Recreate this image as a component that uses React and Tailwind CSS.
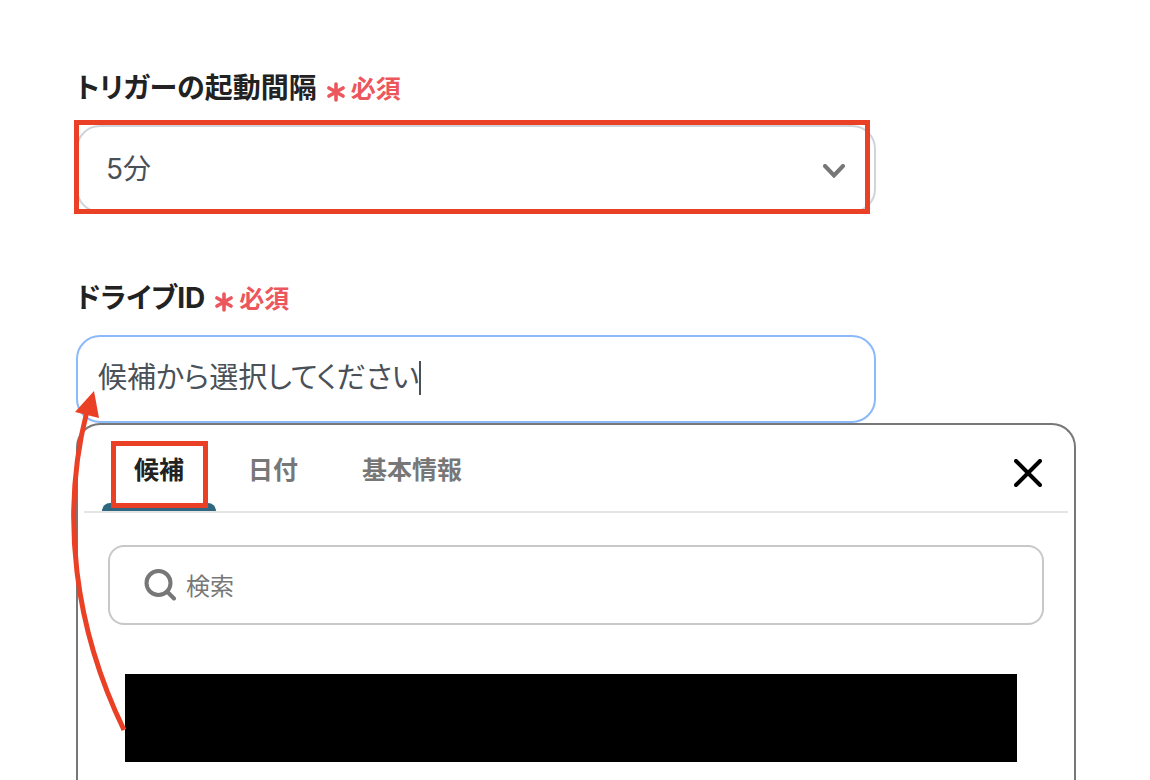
import { useState } from "react";

function Required() {
  return (
    <span className="flex items-center gap-1.5 pt-1 text-[25px] font-bold text-[#eb575c]">
      <svg aria-hidden="true" viewBox="0 0 18 20" className="mt-1 h-5 w-[18px]" fill="none" stroke="currentColor" strokeWidth="3.6" strokeLinecap="round">
        <path d="M9 2v16M2 6l14 8M16 6L2 14" />
      </svg>
      <span>必須</span>
    </span>
  );
}

function FieldLabel({ htmlFor, children }) {
  return (
    <label htmlFor={htmlFor} className="flex h-[42px] items-center gap-2.5 text-[28px] font-bold text-[#222222]">
      <span>{children}</span>
      <Required />
    </label>
  );
}

const tabs = ["候補", "日付", "基本情報"];

function CandidatePanel() {
  const [active, setActive] = useState("候補");
  return (
    <section className="relative flex w-full max-w-[1000px] flex-1 flex-col rounded-t-3xl border-2 border-b-0 border-[#777777] bg-white">
      <div className="mx-1.5 flex h-[88px] items-center justify-between border-b-2 border-[#e5e5e5] pr-[26px] pl-[18px]">
        <div role="tablist" className="flex h-full">
          {tabs.map((tab) => (
            <button
              key={tab}
              type="button"
              role="tab"
              aria-selected={active === tab}
              onClick={() => setActive(tab)}
              className={
                active === tab
                  ? "relative px-8 pt-1.5 text-[25px] font-bold text-[#222222]"
                  : "relative px-8 pt-1.5 text-[25px] font-bold text-[#777777]"
              }
            >
              {tab}
              {active === tab && <span className="absolute inset-x-0 bottom-0 h-2 rounded-t-lg bg-[#2f6780]" />}
              {tab === "候補" && (
                <span className="pointer-events-none absolute top-4 right-2 bottom-[3px] left-[9px] border-5 border-[#ea4025]" />
              )}
            </button>
          ))}
        </div>
        <button type="button" aria-label="閉じる" className="pt-2.5 text-black">
          <svg viewBox="0 0 28 28" className="block size-7" fill="none" stroke="currentColor" strokeWidth="4" strokeLinecap="round">
            <path d="M2 2l24 24M26 2L2 26" />
          </svg>
        </button>
      </div>

      <label className="mx-[30px] mt-8 flex h-20 items-center gap-2.5 rounded-2xl border-2 border-[#c8c8c8] px-[34px] text-[#777777]">
        <svg aria-hidden="true" viewBox="0 0 32 32" className="size-8 shrink-0" fill="none" stroke="currentColor" strokeWidth="4" strokeLinecap="round">
          <circle cx="14.5" cy="14" r="12" />
          <path d="M23 22.5l7 7" />
        </svg>
        <input
          type="text"
          aria-label="検索"
          placeholder="検索"
          className="min-w-0 flex-1 bg-transparent pt-1 text-2xl outline-none placeholder:text-[#777777]"
        />
      </label>

      <div className="mt-[49px] mr-[57px] mb-[18px] ml-[47px] h-[88px] bg-black" />

      <svg
        aria-hidden="true"
        viewBox="68 388 64 348"
        className="pointer-events-none absolute -top-[37px] -left-2.5 h-[348px] w-16"
      >
        <path d="M124 730C75 629 60 516 87 411" fill="none" stroke="#ea4025" strokeWidth="5" />
        <path d="M94 391L75 412L99 418Z" fill="#ea4025" />
      </svg>
    </section>
  );
}

export default function App() {
  const [driveId, setDriveId] = useState("候補から選択してください");
  return (
    <main className="flex min-h-screen flex-col bg-white pt-[67px] pr-[74px] pl-[76px] font-['Inter','Noto_Sans_CJK_JP',sans-serif] [font-feature-settings:'palt']">
      <FieldLabel htmlFor="interval">トリガーの起動間隔</FieldLabel>
      <div className="relative mt-4 w-full max-w-[800px]">
        <select
          id="interval"
          className="block h-[88px] w-full appearance-none rounded-3xl border-2 border-[#ced4da] bg-white px-7 text-[28px] text-[#495057] outline-none"
        >
          <option>5分</option>
          <option>10分</option>
          <option>15分</option>
        </select>
        <svg
          aria-hidden="true"
          viewBox="0 0 22 14"
          className="pointer-events-none absolute top-[39px] right-[31px] h-3.5 w-[22px]"
          fill="none"
          stroke="#777777"
          strokeWidth="4"
          strokeLinecap="round"
        >
          <path d="M2 2l9 9.5l9-9.5" />
        </svg>
        <div className="pointer-events-none absolute -top-[5px] right-1.5 -bottom-px -left-0.5 border-5 border-[#ea4025]" />
      </div>

      <div className="mt-16">
        <FieldLabel htmlFor="drive">ドライブID</FieldLabel>
      </div>
      <div className="mt-4 flex h-[88px] w-full max-w-[800px] items-center rounded-3xl border-2 border-[#8bb9fa] bg-white px-5 pb-0.5">
        <input
          id="drive"
          type="text"
          value={driveId}
          onChange={(e) => setDriveId(e.target.value)}
          className="field-sizing-content max-w-full bg-transparent text-[29px] text-[#495057] caret-transparent outline-none"
        />
        <span className="h-[34px] w-0.5 bg-[#495057]" />
      </div>
      <CandidatePanel />
    </main>
  );
}
